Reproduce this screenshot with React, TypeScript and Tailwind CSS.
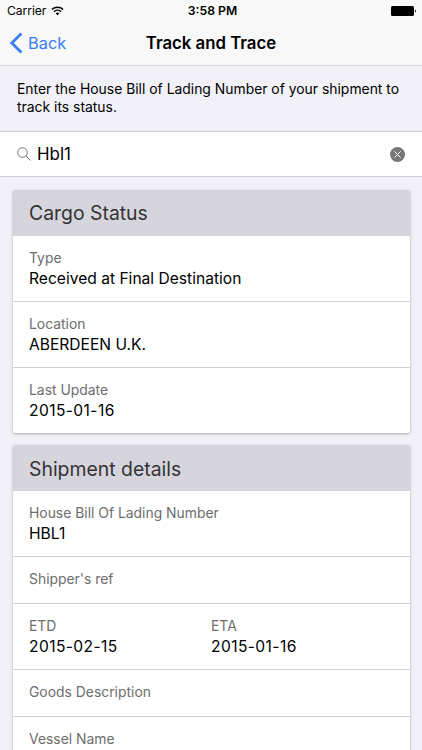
const statusRows = [
  { label: 'Type', value: 'Received at Final Destination' },
  { label: 'Location', value: 'ABERDEEN U.K.' },
  { label: 'Last Update', value: '2015-01-16', wide: true },
]

function Field({ label, value, wide }: { label: string; value?: string; wide?: boolean }) {
  return (
    <div className="flex-1">
      <div className="text-[13.9px] leading-5 text-[#6d6d6d]">{label}</div>
      {value && (
        <div className={wide ? 'text-[15.6px] leading-[21px] tracking-[0.4px]' : 'text-[15.6px] leading-[21px]'}>
          {value}
        </div>
      )}
    </div>
  )
}

export default function App() {
  return (
    <div className="w-[422px] h-[750px] overflow-hidden flex flex-col bg-[#f2f1f7] font-['Inter','Liberation_Sans',sans-serif] text-black">
      {/* Status bar + nav */}
      <header className="h-[66px] shrink-0 bg-[#f8f8f8] border-b border-[#d6d5dc]">
        <div className="grid grid-cols-[1fr_auto_1fr] items-center h-[22px] pl-[7px] pr-[5px] text-[12.2px]">
          <div className="flex items-center gap-[5px]">
            <span className="tracking-[-0.1px]">Carrier</span>
            <svg width="13" height="10" viewBox="0 0 14 10" fill="none" stroke="#000" strokeWidth="1.7">
              <path d="M1 3.4a8.6 8.6 0 0 1 12 0M3.2 5.8a5.4 5.4 0 0 1 7.6 0" />
              <path d="M7 9.6 5 7.5a3 3 0 0 1 4 0z" fill="#000" stroke="none" />
            </svg>
          </div>
          <span className="pl-[1px] text-center font-semibold">3:58 PM</span>
          <svg className="justify-self-end" width="26" height="10" viewBox="0 0 26 10">
            <rect width="23" height="10" rx="1.6" />
            <path d="M24 3.4v3.2a1.8 1.8 0 0 0 0-3.2z" />
          </svg>
        </div>
        <div className="grid grid-cols-[1fr_auto_1fr] items-center h-[43px] px-[9px]">
          <button className="flex items-center gap-[5px] text-[16.4px] text-[#387ef5]">
            <svg width="14" height="22" viewBox="0 0 14 22" fill="none" stroke="currentColor" strokeWidth="2.8">
              <path d="M12.4 1.4 2.8 11l9.6 9.6" />
            </svg>
            Back
          </button>
          <h1 className="text-center text-[16.8px] font-semibold whitespace-nowrap">Track and Trace</h1>
        </div>
      </header>

      <p className="h-[65px] shrink-0 pl-[17px] pr-[14px] pt-[14px] text-[13.9px] leading-[18px]">
        Enter the House Bill of Lading Number of your shipment to track its status.
      </p>

      {/* Search */}
      <div className="h-[46px] shrink-0 flex items-center px-[17px] bg-white border-y border-[#cfced4]">
        <svg width="14" height="14" viewBox="0 0 14 14" fill="none" stroke="#777" strokeWidth="1">
          <circle cx="5.5" cy="5.5" r="4.8" />
          <path d="m9 9 4.5 4.5" />
        </svg>
        <span className="ml-[6px] pt-[1px] flex-1 text-[16.9px]">Hbl1</span>
        <svg width="15" height="15" viewBox="0 0 15 15">
          <circle cx="7.5" cy="7.5" r="7.5" fill="#777" />
          <path d="m4.3 4.3 6.4 6.4m0-6.4-6.4 6.4" stroke="#fff" />
        </svg>
      </div>

      <main className="flex flex-col gap-3 px-[12.5px] pt-[13px]">
        <section className="shrink-0 overflow-hidden rounded-[2px] bg-white shadow-[0_1px_3px_rgba(0,0,0,0.3)]">
          <h2 className="h-[46px] px-[16.5px] bg-[#d6d5de] text-[19.4px] leading-[46px] text-[#333]">Cargo Status</h2>
          {statusRows.map((row) => (
            <div
              key={row.label}
              className="h-[66px] px-[16.5px] pt-[12px] border-b border-[#d0d0d3] last:h-[65px] last:border-b-0"
            >
              <Field label={row.label} value={row.value} wide={row.wide} />
            </div>
          ))}
        </section>

        <section className="shrink-0 overflow-hidden rounded-[2px] bg-white shadow-[0_1px_3px_rgba(0,0,0,0.3)]">
          <h2 className="h-[46px] px-[16.5px] bg-[#d6d5de] text-[19.4px] leading-[48px] text-[#333]">Shipment details</h2>
          <div className="h-[66px] px-[16.5px] pt-[12px] border-b border-[#d0d0d3]">
            <Field label="House Bill Of Lading Number" value="HBL1" />
          </div>
          <div className="h-[47px] px-[16.5px] pt-[12px] border-b border-[#d0d0d3]">
            <Field label="Shipper's ref" />
          </div>
          <div className="h-[66px] flex px-[16.5px] pt-[12px] border-b border-[#d0d0d3]">
            <Field label="ETD" value="2015-02-15" wide />
            <Field label="ETA" value="2015-01-16" wide />
          </div>
          <div className="h-[47px] px-[16.5px] pt-[12px] border-b border-[#d0d0d3]">
            <Field label="Goods Description" />
          </div>
          <div className="h-[66px] px-[16.5px] pt-[12px]">
            <Field label="Vessel Name" />
          </div>
        </section>
      </main>
    </div>
  )
}
